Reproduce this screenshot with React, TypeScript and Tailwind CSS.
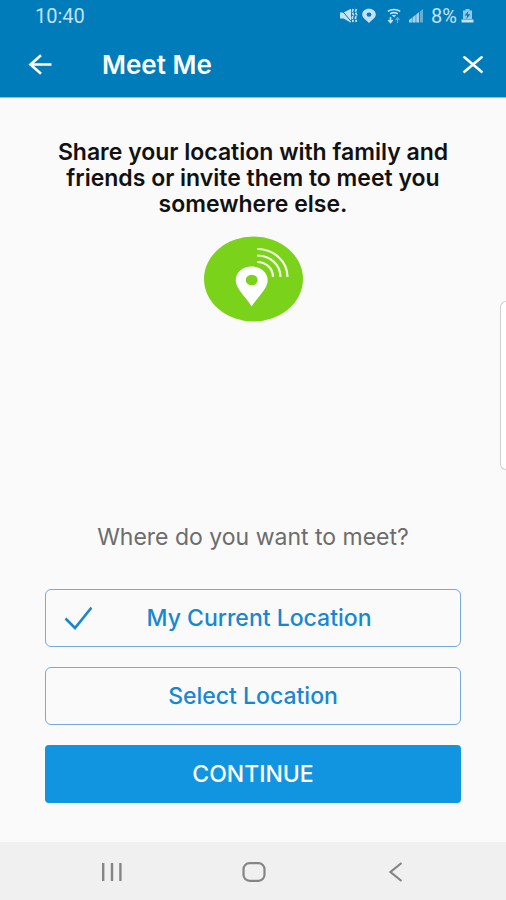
import { useState } from 'react'

const OPTIONS = ['My Current Location', 'Select Location']

function StatusBar() {
  return (
    <div className="flex h-8 items-center justify-between pr-8 pl-[35px] font-['Roboto',sans-serif] text-[#c3e2f4]">
      <p className="text-xl leading-6">10:40</p>
      <div className="flex items-center">
        <svg width="18" height="16" viewBox="0 0 18 16" fill="currentColor" aria-hidden="true">
          <path d="M0 4.500h3.500L11 .8v14l-7.500-4.300H0z" />
          <path d="M0 .3l11.500 13.500" stroke="#007cba" strokeWidth="1" />
          <path d="M13.200 1l-1 3 1.200 3-1.200 3 1 4M16.400 1l-1 3 1.200 3-1.200 3 1 4" fill="none" stroke="currentColor" strokeWidth="1.700" strokeDasharray="3 .8" />
        </svg>
        <svg className="ml-1" width="14" height="16" viewBox="0 0 14 16" fill="currentColor" aria-hidden="true">
          <path fillRule="evenodd" d="M7 .8C3 .8.2 3.400.2 6.600.2 10.200 4.600 12.200 7 15c2.400-2.800 6.800-4.800 6.800-8.400C13.800 3.400 11 .8 7 .8zm0 3.600a2.400 2.200 0 1 1 0 4.400 2.400 2.200 0 0 1 0-4.400z" />
        </svg>
        <svg className="ml-[11px]" width="14" height="16" viewBox="0 0 14 16" fill="none" stroke="currentColor" aria-hidden="true">
          <path d="M.8 3.400c3.600-2.500 8.800-2.500 12.400 0M3.200 5.900c2.300-1.600 5.300-1.600 7.600 0" strokeWidth="1.600" />
          <path d="M4.800 7h4.400L7 9.600z" fill="currentColor" stroke="none" />
          <path d="M3.500 9v5M1.300 12l2.200 2.500L5.700 12" strokeWidth="1.600" />
          <path d="M10.500 15v-5M8.500 12l2-2.300 2 2.300" strokeWidth="1.200" opacity=".5" />
        </svg>
        <svg className="ml-2" width="14" height="16" viewBox="0 0 14 16" fill="currentColor" aria-hidden="true">
          <path d="M0 12l10.200-8v10.500H0z" opacity=".85" />
          <path d="M10.800 3.500L14 1v13.500h-3.200z" opacity=".5" />
          <path d="M3.300 2v13M6.900 2v13M10.500 2v13" stroke="#007cba" strokeWidth=".8" opacity=".7" />
        </svg>
        <p className="ml-2 text-xl leading-6">8%</p>
        <svg className="ml-1" width="13" height="16" viewBox="0 0 13 16" fill="currentColor" aria-hidden="true">
          <path d="M4.500 1h4v1.500H11V11H2V2.500h2.500z" opacity=".75" />
          <path d="M.5 11.500h12v3H.5z" />
          <path d="M7.300 3L3.500 7.600h2.600L5.400 11l4-4.800H6.700z" fill="#007cba" />
        </svg>
      </div>
    </div>
  )
}

function ShareBadge() {
  return (
    <svg width="99" height="86" viewBox="0 0 99 86" fill="none" aria-hidden="true">
      <ellipse cx="49.500" cy="43" rx="49.500" ry="42.500" fill="#7bd21b" />
      <path
        fill="#fff"
        fillRule="evenodd"
        d="M47.700 30.500c-9.300 0-16 6-16 13.700 0 8.600 9.600 15.800 16 26.300 6.400-10.500 16-17.700 16-26.300 0-7.700-6.700-13.700-16-13.700zm0 8.300a6 5.200 0 1 1 0 10.400 6 5.200 0 0 1 0-10.400z"
      />
      <path
        d="M53 13c16.500 0 30.500 12 30.500 28M53 19.500c13 0 23.500 9 23.500 21.500M53 26c8.800 0 16 6 16 15"
        stroke="#f1fbe4"
        strokeWidth="2.200"
      />
    </svg>
  )
}

function NavBar() {
  return (
    <nav className="flex h-[58px] shrink-0 items-center justify-around bg-[#f0f0f0] pt-0.5 pr-10 pl-[42px] text-[#858585]">
      <button type="button" aria-label="Recent apps" className="cursor-pointer">
        <svg width="22" height="20" viewBox="0 0 22 20" fill="none" stroke="currentColor" strokeWidth="2.400">
          <path d="M2.200 1v18M11 1v18M19.400 1v18" />
        </svg>
      </button>
      <button type="button" aria-label="Home" className="cursor-pointer">
        <svg width="24" height="20" viewBox="0 0 24 20" fill="none" stroke="currentColor" strokeWidth="2.200">
          <rect x="1.500" y="1.200" width="21" height="17.600" rx="6" />
        </svg>
      </button>
      <button type="button" aria-label="Back" className="cursor-pointer">
        <svg width="22" height="20" viewBox="0 0 22 20" fill="none" stroke="currentColor" strokeWidth="2.200">
          <path d="M16.500 1L5.500 10l11 9" />
        </svg>
      </button>
    </nav>
  )
}

export default function App() {
  const [selected, setSelected] = useState(0)

  return (
    <div className="relative flex min-h-screen w-full flex-col bg-[#fafafa] font-['Inter','Roboto',sans-serif]">
      <header className="shrink-0 border-b border-[#8fbfe0] bg-[#007cba]">
        <StatusBar />
        <div className="flex h-[65px] items-center pr-[22px] pl-7 text-white">
          <button type="button" aria-label="Go back" className="cursor-pointer">
            <svg width="24" height="22" viewBox="0 0 24 22" fill="none" stroke="currentColor" strokeWidth="2.600">
              <path d="M23.500 10.500H3M13 1.300L2.500 10.500 13 19.700" />
            </svg>
          </button>
          <h1 className="ml-[50px] flex-1 text-[26px] font-semibold">Meet Me</h1>
          <button type="button" aria-label="Close" className="cursor-pointer">
            <svg width="22" height="18" viewBox="0 0 22 18" fill="none" stroke="currentColor" strokeWidth="2.600">
              <path d="M1.500 .5l19 16M20.500 .5l-19 16" />
            </svg>
          </button>
        </div>
      </header>

      <main className="flex flex-1 flex-col px-[45px] pb-[39px]">
        <div className="flex flex-col items-center pt-[41px]">
          <h2 className="text-center text-[23px] leading-[26px] font-semibold text-[#111]">
            Share your location with family and friends or invite them to meet you somewhere else.
          </h2>
          <div className="mt-[19px]">
            <ShareBadge />
          </div>
        </div>

        <p id="meet-question" className="mt-auto text-center text-[23px] leading-8 text-[#6c6c6c]">
          Where do you want to meet?
        </p>
        <div role="group" aria-labelledby="meet-question" className="mt-9 flex flex-col gap-5">
          {OPTIONS.map((label, i) => (
            <button
              key={label}
              type="button"
              aria-pressed={selected === i}
              onClick={() => setSelected(i)}
              className="flex h-[58px] cursor-pointer items-center rounded-md border border-[#76a9df] px-[18px] text-[23px] font-medium text-[#1787d4]"
            >
              {selected === i && (
                <svg className="shrink-0" width="28" height="24" viewBox="0 0 28 24" fill="none" stroke="currentColor" strokeWidth="2.600">
                  <path d="M1.500 12.500l9.500 9.500L27.500 1.500" />
                </svg>
              )}
              <span className={selected === i ? 'flex-1 pr-4' : 'flex-1'}>{label}</span>
            </button>
          ))}
          <button
            type="button"
            className="h-[58px] cursor-pointer rounded bg-[#1295e0] text-[23px] font-medium text-white"
          >
            CONTINUE
          </button>
        </div>
      </main>

      <NavBar />

      {/* edge panel handle */}
      <div className="absolute top-[301px] right-0 h-[169px] w-1.5 rounded-l-md border border-r-0 border-[#d0d0d0] bg-white" />
    </div>
  )
}
